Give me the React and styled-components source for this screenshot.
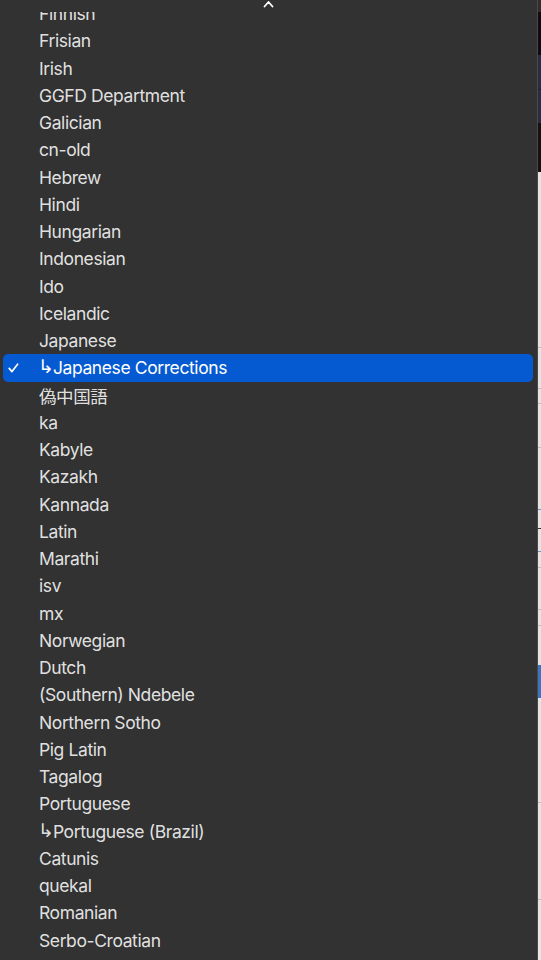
import React from "react";
import styled, { createGlobalStyle } from "styled-components";

const GlobalStyle = createGlobalStyle`
  html, body {
    margin: 0;
    padding: 0;
    background: #e6e6e6;
  }
  #root {
    height: 960px;
  }
`;

const ROW_HEIGHT = 27.25;

const languages = [
  { label: "Finnish" },
  { label: "Frisian" },
  { label: "Irish" },
  { label: "GGFD Department" },
  { label: "Galician" },
  { label: "cn-old" },
  { label: "Hebrew" },
  { label: "Hindi" },
  { label: "Hungarian" },
  { label: "Indonesian" },
  { label: "Ido" },
  { label: "Icelandic" },
  { label: "Japanese" },
  { label: "Japanese Corrections", child: true, selected: true },
  { label: "偽中国語" },
  { label: "ka" },
  { label: "Kabyle" },
  { label: "Kazakh" },
  { label: "Kannada" },
  { label: "Latin" },
  { label: "Marathi" },
  { label: "isv" },
  { label: "mx" },
  { label: "Norwegian" },
  { label: "Dutch" },
  { label: "(Southern) Ndebele" },
  { label: "Northern Sotho" },
  { label: "Pig Latin" },
  { label: "Tagalog" },
  { label: "Portuguese" },
  { label: "Portuguese (Brazil)", child: true },
  { label: "Catunis" },
  { label: "quekal" },
  { label: "Romanian" },
  { label: "Serbo-Croatian" },
];

// the window peeking out behind the menu, top to bottom
const backdrop = [
  { h: 12, c: "#2e2e2e" },
  { h: 43, c: "#0c0c14" },
  { h: 34, c: "#2a2b45" },
  { h: 1, c: "#1c1d30" },
  { h: 33, c: "#2a2b45" },
  { h: 49, c: "#121212" },
  { h: 175, c: "#e4e4e4" },
  { h: 1, c: "#bdbdbd" },
  { h: 40, c: "#e4e4e4" },
  { h: 1, c: "#bdbdbd" },
  { h: 14, c: "#e4e4e4" },
  { h: 1, c: "#bdbdbd" },
  { h: 43, c: "#e4e4e4" },
  { h: 1, c: "#bdbdbd" },
  { h: 61, c: "#e4e4e4" },
  { h: 1, c: "#6f93c8" },
  { h: 18, c: "#e4e4e4" },
  { h: 1, c: "#333333" },
  { h: 22, c: "#e4e4e4" },
  { h: 1, c: "#6f93c8" },
  { h: 15, c: "#e4e4e4" },
  { h: 1, c: "#bdbdbd" },
  { h: 41, c: "#e4e4e4" },
  { h: 1, c: "#bdbdbd" },
  { h: 15, c: "#e4e4e4" },
  { h: 1, c: "#bdbdbd" },
  { h: 39, c: "#e4e4e4" },
  { h: 33, c: "#3a76bf" },
  { h: 104, c: "#e4e4e4" },
  { h: 1, c: "#bdbdbd" },
  { h: 96, c: "#e4e4e4" },
  { h: 1, c: "#bdbdbd" },
  { h: 18, c: "#e4e4e4" },
];

const Screen = styled.div`
  display: flex;
  width: 541px;
  height: 960px;
  overflow: hidden;
`;

const Menu = styled.div`
  display: flex;
  flex-direction: column;
  width: 537px;
  flex: none;
  height: 100%;
  background: #323232;
  border-right: 1px solid #4a4a4a;
  overflow: hidden;
`;

const ScrollCap = styled.div`
  position: relative;
  z-index: 1;
  display: flex;
  justify-content: center;
  height: 12px;
  flex: none;
  background: #323232;
`;

const ItemList = styled.ul`
  list-style: none;
  margin: -12px 0 0;
  padding: 0;
  flex: 1;
`;

const Item = styled.li`
  display: flex;
  align-items: center;
  height: ${ROW_HEIGHT}px;
  margin: 0 4px 0 3px;
  border-radius: 5px;
  background: ${(p) => (p.$selected ? "#0559d1" : "transparent")};
  color: ${(p) => (p.$selected ? "#ffffff" : "rgba(255,255,255,0.87)")};
  font-family: Inter, "Noto Sans CJK JP", sans-serif;
  font-size: 17.5px;
  letter-spacing: -0.4px;
  white-space: nowrap;
`;

const CheckSlot = styled.span`
  display: flex;
  align-items: center;
  justify-content: flex-start;
  width: 36px;
  padding-left: 5px;
  box-sizing: border-box;
  flex: none;
`;

const Branch = styled.span`
  font-family: "DejaVu Sans", sans-serif;
  font-size: 19px;
  line-height: 1;
  letter-spacing: 0;
  margin: -2px -1px 0 -1px;
`;

const Backdrop = styled.div`
  display: flex;
  flex-direction: column;
  flex: 1;
`;

const Band = styled.div`
  flex: none;
  height: ${(p) => p.$h}px;
  background: ${(p) => p.$c};
`;

function Chevron() {
  return (
    <svg width="11" height="8" viewBox="0 0 11 8">
      <polyline
        points="1.5,6.5 5.5,2 9.5,6.5"
        fill="none"
        stroke="#ffffff"
        strokeWidth="1.8"
        strokeLinecap="round"
        strokeLinejoin="round"
      />
    </svg>
  );
}

function Check() {
  return (
    <svg width="11" height="10" viewBox="0 0 11 10">
      <polyline
        points="1.2,5.4 4,8.6 9.6,1.2"
        fill="none"
        stroke="#ffffff"
        strokeWidth="1.7"
        strokeLinecap="round"
        strokeLinejoin="round"
      />
    </svg>
  );
}

export default function App() {
  return (
    <Screen>
      <GlobalStyle />
      <Menu>
        <ScrollCap>
          <Chevron />
        </ScrollCap>
        <ItemList>
          {languages.map((lang) => (
            <Item key={lang.label} $selected={lang.selected}>
              <CheckSlot>{lang.selected && <Check />}</CheckSlot>
              {lang.child && <Branch>↳</Branch>}
              {lang.label}
            </Item>
          ))}
        </ItemList>
      </Menu>
      <Backdrop>
        {backdrop.map((b, i) => (
          <Band key={i} $h={b.h} $c={b.c} />
        ))}
      </Backdrop>
    </Screen>
  );
}
